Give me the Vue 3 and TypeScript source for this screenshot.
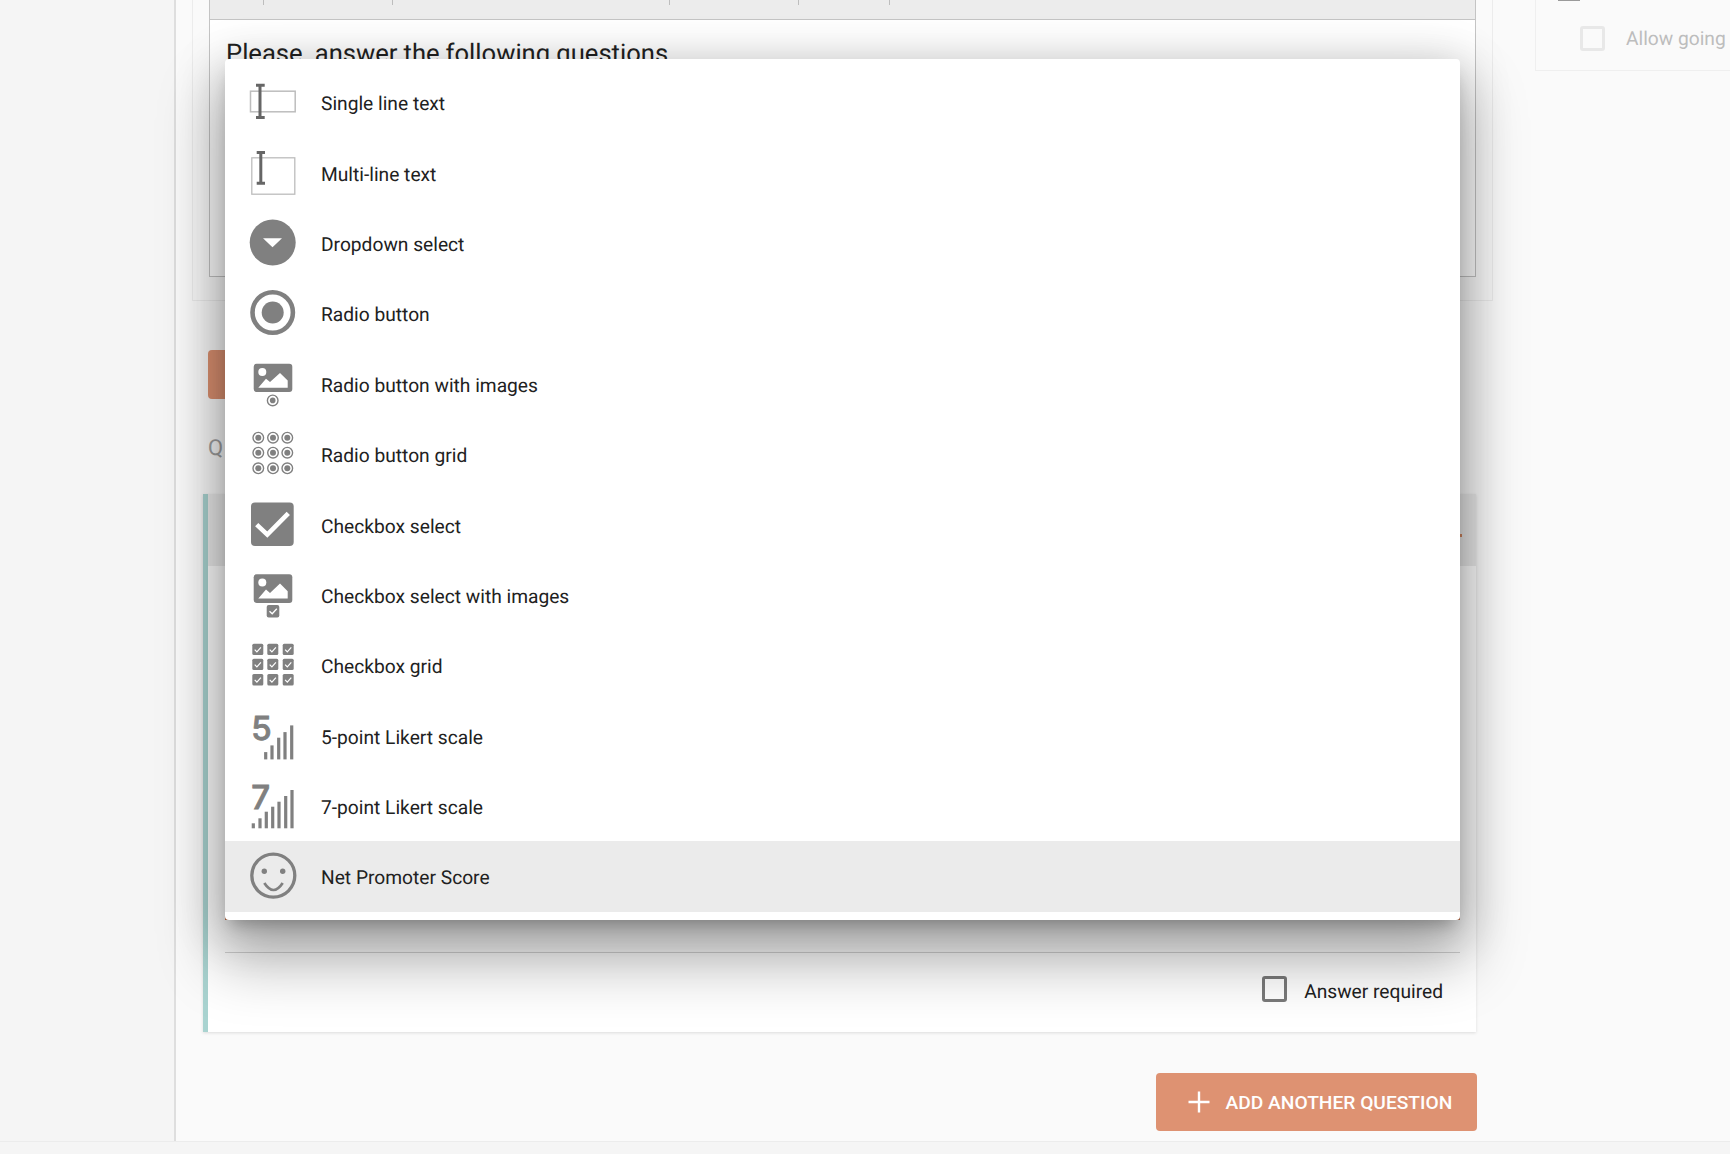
<script setup lang="ts">
type Kind = 'single' | 'multi' | 'dropdown' | 'radio' | 'radioImg' | 'radioGrid' | 'check' | 'checkImg' | 'checkGrid' | 'likert5' | 'likert7' | 'nps'
interface Item { kind: Kind; label: string; active?: boolean }
interface Bar { x: number; top: number }

const items: Item[] = [
  { kind: 'single', label: 'Single line text' },
  { kind: 'multi', label: 'Multi-line text' },
  { kind: 'dropdown', label: 'Dropdown select' },
  { kind: 'radio', label: 'Radio button' },
  { kind: 'radioImg', label: 'Radio button with images' },
  { kind: 'radioGrid', label: 'Radio button grid' },
  { kind: 'check', label: 'Checkbox select' },
  { kind: 'checkImg', label: 'Checkbox select with images' },
  { kind: 'checkGrid', label: 'Checkbox grid' },
  { kind: 'likert5', label: '5-point Likert scale' },
  { kind: 'likert7', label: '7-point Likert scale' },
  { kind: 'nps', label: 'Net Promoter Score', active: true },
]

const radioXs = [13.3, 28, 42.3]
const radioYs = [18.7, 33.7, 49.3]
const checkXs = [7.3, 22.3, 37.7]
const checkYs = [13.8, 28.8, 44.1]

const bars5: Bar[] = [
  { x: 20.7, top: 51.1 }, { x: 27, top: 44.4 }, { x: 33.7, top: 36.7 }, { x: 40, top: 31.1 }, { x: 46.7, top: 24.4 },
]
const bars7: Bar[] = [
  { x: 8.3, top: 52.3 }, { x: 15, top: 47.3 }, { x: 21.3, top: 40.7 }, { x: 27.7, top: 35.7 },
  { x: 34, top: 30.7 }, { x: 40.7, top: 25 }, { x: 47, top: 19 },
]
const tabTicks = [54, 129, 277, 129, 91]
</script>

<template>
  <div class="page">
    <div class="body">
      <aside class="sidebar"></aside>
      <main class="main">
        <section class="qpanel">
          <div class="preview">
            <div class="preview-head">
              <span v-for="(w, i) in tabTicks" :key="i" class="tick" :style="{ width: w + 'px' }"></span>
            </div>
            <h2 class="preview-title">Please&nbsp; answer the following questions</h2>
          </div>
        </section>
        <button class="small-btn" type="button"></button>
        <div class="q-label">Questions</div>
        <section class="card">
          <div class="card-head"><span class="dot"></span></div>
          <div class="card-body">
            <div class="under-btn"></div>
            <div class="card-foot">
              <span class="box"></span>
              <span class="req">Answer required</span>
            </div>
          </div>
        </section>
        <div class="add-row">
          <button class="add-btn" type="button">
            <svg class="plus" width="22" height="22" viewBox="0 0 22 22">
              <path d="M11 0.5V21.5M0.5 11H21.5" stroke="#fff" stroke-width="2.4" fill="none" />
            </svg>
            <span>ADD ANOTHER QUESTION</span>
          </button>
        </div>
      </main>
      <aside class="right">
        <div class="right-card">
          <span class="right-mark"></span>
          <div class="right-row">
            <span class="right-box"></span>
            <span class="right-text">Allow going</span>
          </div>
        </div>
      </aside>
    </div>
    <footer class="footer"></footer>

    <ul class="menu">
      <li v-for="item in items" :key="item.kind" class="item" :class="{ active: item.active }">
        <svg class="ico" width="60" height="70" viewBox="0 0 60 70">
          <template v-if="item.kind === 'single'">
            <rect x="5.5" y="24.2" width="44.7" height="20.6" fill="none" stroke="#bdbdbd" stroke-width="1.5" />
            <path d="M15 17V51.7M11 18.3H19.7M11 50.4H19.7" stroke="#666" stroke-width="3" fill="none" />
          </template>
          <template v-else-if="item.kind === 'multi'">
            <rect x="6.8" y="19.8" width="43" height="36.4" fill="none" stroke="#bdbdbd" stroke-width="1.3" />
            <path d="M15.8 13V46.5M11.7 14.4H20M11.7 45.2H20" stroke="#666" stroke-width="3" fill="none" />
          </template>
          <template v-else-if="item.kind === 'dropdown'">
            <circle cx="27.7" cy="34.5" r="23" fill="#808080" />
            <path d="M18 30.2H37L27.5 39.2Z" fill="#fff" />
          </template>
          <template v-else-if="item.kind === 'radio'">
            <circle cx="27.7" cy="34.5" r="20.2" fill="none" stroke="#808080" stroke-width="4.6" />
            <circle cx="27.7" cy="34.5" r="11" fill="#808080" />
          </template>
          <template v-else-if="item.kind === 'radioImg'">
            <rect x="8.7" y="14.7" width="38.6" height="28.4" rx="3" fill="#808080" />
            <circle cx="17.3" cy="23.1" r="4" fill="#fff" />
            <path d="M13.3 38.7L21 29.7L25 33L35 24L42.7 31.4V38.7Z" fill="#fff" />
            <circle cx="27.7" cy="51.4" r="5.3" fill="none" stroke="#808080" stroke-width="1.4" />
            <circle cx="27.7" cy="51.4" r="2.8" fill="#808080" />
          </template>
          <template v-else-if="item.kind === 'radioGrid'">
            <template v-for="y in radioYs" :key="y">
              <template v-for="x in radioXs" :key="x">
                <circle :cx="x" :cy="y" r="5.3" fill="none" stroke="#808080" stroke-width="1.4" />
                <circle :cx="x" :cy="y" r="3" fill="#808080" />
              </template>
            </template>
          </template>
          <template v-else-if="item.kind === 'check'">
            <rect x="6" y="12.6" width="42.7" height="43.3" rx="4" fill="#808080" />
            <path d="M11.7 34.6L22.3 44.6L43.3 23.3" fill="none" stroke="#fff" stroke-width="4.6" />
          </template>
          <template v-else-if="item.kind === 'checkImg'">
            <rect x="8.7" y="14.2" width="38.6" height="28.7" rx="3" fill="#808080" />
            <circle cx="17.3" cy="22.5" r="4" fill="#fff" />
            <path d="M13.3 38.5L21 29.5L25 32.9L35 23.5L42.7 31.2V38.5Z" fill="#fff" />
            <rect x="21.7" y="44.9" width="12.6" height="12.6" rx="2" fill="#808080" />
            <path d="M24.5 51.2L27.2 53.8L31.8 48.8" fill="none" stroke="#fff" stroke-width="1.3" />
          </template>
          <template v-else-if="item.kind === 'checkGrid'">
            <template v-for="y in checkYs" :key="y">
              <template v-for="x in checkXs" :key="x">
                <rect :x="x" :y="y" width="11" height="11.3" rx="1.5" fill="#808080" />
                <path :d="`M${x + 2.4} ${y + 5.8}l2.2 2.2l4-4.4`" fill="none" stroke="#fff" stroke-width="1.2" />
              </template>
            </template>
          </template>
          <template v-else-if="item.kind === 'likert5'">
            <text x="6.2" y="39.4" class="digit">5</text>
            <rect v-for="b in bars5" :key="b.x" :x="b.x - 1.6" :y="b.top" width="3.2" :height="58.4 - b.top" fill="#808080" />
          </template>
          <template v-else-if="item.kind === 'likert7'">
            <text x="6.2" y="38.3" class="digit">7</text>
            <rect v-for="b in bars7" :key="b.x" :x="b.x - 1.6" :y="b.top" width="3.2" :height="57.3 - b.top" fill="#808080" />
          </template>
          <template v-else>
            <circle cx="28.3" cy="34.6" r="21.5" fill="none" stroke="#808080" stroke-width="3.3" />
            <circle cx="19.3" cy="30.3" r="2.7" fill="#808080" />
            <circle cx="37.7" cy="30.3" r="2.7" fill="#808080" />
            <path d="M19.3 42Q28.5 56 37.7 42" fill="none" stroke="#808080" stroke-width="2.7" />
          </template>
        </svg>
        <span class="label">{{ item.label }}</span>
      </li>
    </ul>
  </div>
</template>

<style>
html, body { margin: 0; padding: 0; background: #fafafa; }
</style>

<style scoped>
.page {
  position: relative;
  width: 1730px;
  height: 1154px;
  overflow: hidden;
  display: flex;
  flex-direction: column;
  background: #fafafa;
  font-family: Roboto, "Liberation Sans", sans-serif;
  text-rendering: geometricPrecision;
}
.body { flex: 1; display: flex; min-height: 0; }
.sidebar {
  width: 174px;
  flex: none;
  background: #f5f5f5;
  border-right: 2px solid #dedede;
}
.main {
  width: 1301px;
  flex: none;
  margin-left: 16px;
  display: flex;
  flex-direction: column;
}
.qpanel {
  height: 301px;
  box-sizing: border-box;
  border: 1px solid #ececec;
  border-top: none;
  padding: 0 16px 0 16px;
}
.preview {
  height: 277px;
  box-sizing: border-box;
  background: #fff;
  border: 1px solid #c4c4c4;
  border-top: none;
  overflow: hidden;
}
.preview-head {
  height: 19px;
  background: #ececec;
  border-bottom: 1px solid #c4c4c4;
  display: flex;
}
.tick {
  height: 5px;
  box-sizing: border-box;
  border-right: 1px solid #bdbdbd;
  flex: none;
}
.preview-title {
  margin: 17px 0 0 16px;
  font-size: 25.6px;
  line-height: 34px;
  font-weight: 400;
  word-spacing: -0.3px;
  color: #212121;
  white-space: nowrap;
}
.small-btn {
  margin: 49px 0 0 16px;
  width: 120px;
  height: 49px;
  border: none;
  border-radius: 4px;
  background: #de9272;
  padding: 0;
}
.q-label {
  margin: 36px 0 0 16px;
  font-size: 22px;
  line-height: 28px;
  letter-spacing: 2px;
  color: #a0a0a0;
}
.card {
  position: relative;
  margin: 31px 17px 0 11px;
  height: 538px;
  box-sizing: border-box;
  border-left: 5px solid #a9d3d0;
  background: #fff;
  box-shadow: 0 1px 3px rgba(0, 0, 0, 0.12);
  display: flex;
  flex-direction: column;
}
.card-head {
  position: relative;
  height: 72px;
  flex: none;
  background: #ececec;
}
.dot {
  position: absolute;
  right: 14.5px;
  top: 40px;
  width: 1.5px;
  height: 3px;
  background: #d4875f;
}
.card-body {
  flex: 1;
  display: flex;
  flex-direction: column;
  justify-content: flex-end;
  padding: 0 16px 0 17px;
}
.under-btn {
  height: 40px;
  background: #c9744c;
  margin-bottom: 32px;
}
.card-foot {
  height: 80px;
  box-sizing: border-box;
  border-top: 1px solid #d4d4d4;
  display: flex;
  align-items: center;
  justify-content: flex-end;
  padding: 0 17px 6px 0;
}
.box {
  width: 25px;
  height: 26px;
  box-sizing: border-box;
  border: 3px solid #7a7a7a;
  border-radius: 3px;
  margin: 0 17px 2px 0;
}
.req {
  font-size: 19.2px;
  line-height: 24px;
  color: #212121;
  position: relative;
  top: 2px;
}
.add-row {
  margin: 41px 16px 0 0;
  display: flex;
  justify-content: flex-end;
}
.add-btn {
  width: 321px;
  height: 58px;
  box-sizing: border-box;
  border: none;
  border-radius: 4px;
  background: #de9272;
  color: #fff;
  display: flex;
  align-items: center;
  padding: 0 0 0 32px;
  font-family: inherit;
  font-size: 19.2px;
  font-weight: 500;
}
.plus { flex: none; margin-right: 15.5px; }
.right {
  margin-left: 42px;
  flex: 1;
  min-width: 0;
}
.right-card {
  height: 71px;
  box-sizing: border-box;
  border: 1px solid #efefef;
  border-top: none;
  border-right: none;
  display: flex;
  flex-direction: column;
  white-space: nowrap;
  overflow: hidden;
}
.right-mark {
  width: 22px;
  height: 1px;
  margin-left: 22px;
  background: #9a9a9a;
  flex: none;
}
.right-row {
  display: flex;
  align-items: center;
  margin: 25px 0 0 44px;
}
.right-box {
  width: 25px;
  height: 25px;
  flex: none;
  box-sizing: border-box;
  border: 3px solid #e8e8e8;
  border-radius: 3px;
  margin-right: 21px;
}
.right-text { font-size: 19.2px; color: #bdbdbd; }
.footer {
  height: 13px;
  flex: none;
  box-sizing: border-box;
  background: #f5f5f5;
  border-top: 1px solid #ececec;
}
.menu {
  position: absolute;
  left: 225px;
  top: 59px;
  width: 1235px;
  height: 861px;
  box-sizing: border-box;
  margin: 0;
  padding: 8px 0;
  list-style: none;
  background: #fff;
  border-radius: 4px;
  box-shadow: 0 36px 60px 8px rgba(0, 0, 0, 0.28), 0 8px 46px 8px rgba(0, 0, 0, 0.16), 0 10px 14px -6px rgba(0, 0, 0, 0.22);
}
.item {
  height: 70.4px;
  display: flex;
  align-items: center;
  padding-left: 20px;
}
.item.active { background: #ebebeb; }
.ico { flex: none; margin-right: 16px; }
.digit {
  font-family: Inter, Roboto, sans-serif;
  font-size: 33px;
  font-weight: 500;
  fill: #808080;
  stroke: #808080;
  stroke-width: 0.8px;
}
.label {
  font-size: 19.2px;
  margin-top: 3px;
  color: #212121;
}
</style>
